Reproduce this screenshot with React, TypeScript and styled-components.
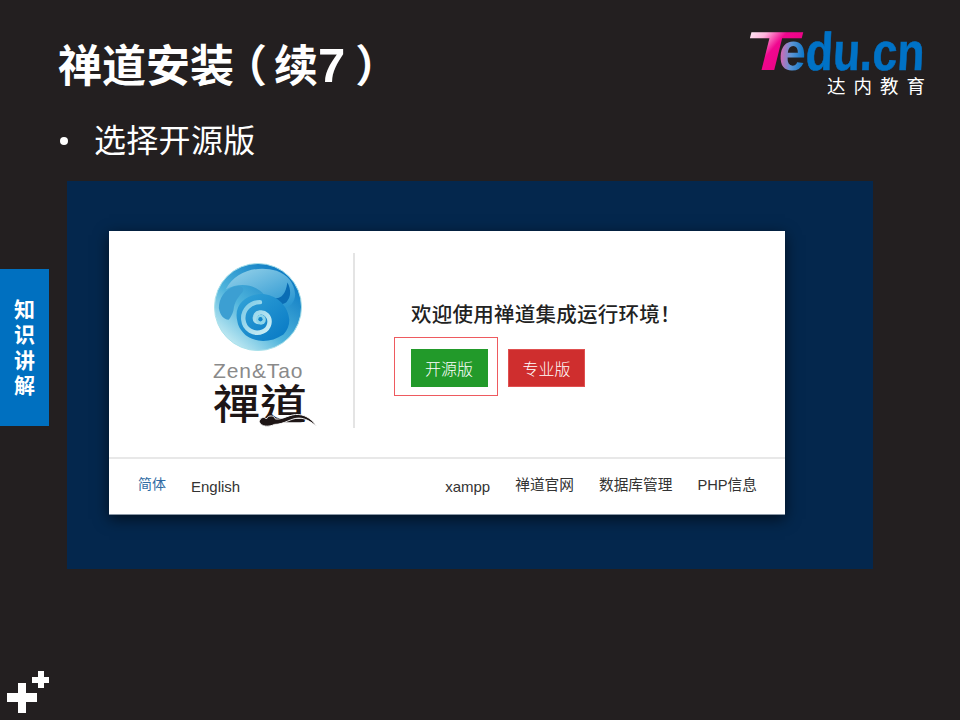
import React from "react";
import styled, { createGlobalStyle } from "styled-components";

const Global = createGlobalStyle`
  html, body { margin: 0; padding: 0; background: #231f20; }
  * { box-sizing: border-box; }
`;
const CJK = `"Liberation Sans", "Noto Sans CJK SC", sans-serif`;

const Slide = styled.div`
  position: relative; width: 960px; height: 720px; overflow: hidden;
  background: #231f20; font-family: ${CJK}; color: #fff;
  display: flex; flex-direction: column;
`;
const Header = styled.header`
  display: flex; justify-content: space-between; align-items: flex-start;
  height: 118px; padding: 31px 35px 0 58px;
`;
const Title = styled.h1`
  margin: -3px 0 0; font-size: 44px; line-height: 70px; font-weight: 700; white-space: nowrap;
  display: flex; align-items: baseline;
`;
const Paren = styled.span<{ $left: number; $right: number }>`
  font-family: "Noto Sans CJK SC", sans-serif;
  font-feature-settings: "halt";
  margin-left: ${(p) => p.$left}px; margin-right: ${(p) => p.$right}px;
`;
const Seven = styled.span`
  font-size: 49px;
`;
const Brand = styled.div`
  display: flex; flex-direction: column; align-items: flex-end; width: 177px;
`;
const BrandCn = styled.div`
  display: flex; gap: 8px; font-size: 18.5px; line-height: 22px; margin-top: 2px; color: #fff;
`;
const LogoSvg = styled.svg`
  display: block; margin-bottom: -9px;
`;
const Bullet = styled.div`
  display: flex; align-items: center; height: 46px; padding-left: 60px; font-size: 32px; line-height: 46px; letter-spacing: 0.3px;
  &::before { content: ""; width: 8px; height: 8px; border-radius: 50%; background: #fff; margin-right: 26px; }
`;
const Backdrop = styled.section`
  margin: 17px 0 0 67px; width: 806px; height: 388px; padding: 50px 88px 55px 42px;
  background: #04274d;
`;
const Card = styled.div`
  width: 676px; height: 284px; background: #fff; display: flex; flex-direction: column;
  box-shadow: 0 4px 14px rgba(0, 0, 0, 0.6);
  border-bottom: 1px solid #8a97a6;
`;
const Main = styled.div`
  height: 228px; display: flex; align-items: flex-start; border-bottom: 2px solid #e8e8e8;
`;
const LogoCol = styled.div`
  margin-top: 22px; width: 246px; height: 175px; border-right: 2px solid #e4e4e4;
  padding: 10px 0 0 104px; display: flex; flex-direction: column;
`;
const ZenText = styled.div`
  margin-top: 10px; font-size: 21px; line-height: 20px; color: #8a8a8a; font-family: "Liberation Sans", sans-serif;
  letter-spacing: 0.9px; white-space: nowrap;
`;
const ZenHan = styled.div`
  position: relative; width: 106px; height: 48px; font-family: "Noto Sans CJK TC", sans-serif;
  font-size: 47px; line-height: 46px; color: #1e1616; font-weight: 500; white-space: nowrap;
`;
const ZenGlyphs = styled.span`
  display: inline-block; transform: scaleY(0.86); transform-origin: 50% 20%;
`;
const Swoosh = styled.svg`
  position: absolute; left: 44px; top: 29px;
`;
const Welcome = styled.div`
  padding: 67px 0 0 39px; display: flex; flex-direction: column;
`;
const Heading = styled.h2`
  margin: 0 0 0 17px; font-size: 20.5px; line-height: 30px; font-weight: 500; letter-spacing: 0.25px; color: #222; white-space: nowrap;
  font-family: "Noto Sans CJK SC", sans-serif;
`;
const Buttons = styled.div`
  display: flex; align-items: flex-start; margin-top: 9px;
`;
const Highlight = styled.div`
  width: 104px; height: 59px; border: 1.5px solid #ee5a5f; padding: 11px 0 0 15.5px;
`;
const Btn = styled.div<{ $bg: string }>`
  width: 77px; height: 38px; background: ${(p) => p.$bg}; color: #fff; font-size: 16px;
  display: flex; align-items: center; justify-content: center; font-family: "Noto Sans CJK SC", sans-serif;
  font-weight: 300;
`;
const RedBtn = styled(Btn)`
  margin: 12px 0 0 10px; border: 1px solid #e05050;
`;
const Footer = styled.footer`
  flex: 1; display: flex; align-items: center; justify-content: space-between; padding: 0 28px 3px 29px;
  font-size: 14.7px; color: #333;
`;
const LinkGroup = styled.div<{ $gap: number }>`
  display: flex; align-items: center; gap: ${(p) => p.$gap}px;
`;
const FootLink = styled.span`
  color: #333; white-space: nowrap; line-height: 20px;
`;
const ActiveLink = styled(FootLink)`
  color: #2f6aa3; font-size: 14px; margin-top: -2px;
`;
const Latin = styled(FootLink)`
  font-size: 15px; margin-top: 3px;
`;
const SideTab = styled.aside`
  position: absolute; left: 0; top: 269px; width: 49px; height: 157px; background: #0070c0;
  display: flex; flex-direction: column; align-items: center; justify-content: center;
  font-size: 21px; line-height: 25.5px; font-weight: 700;
`;
const Plus = styled.svg`
  position: absolute; left: 7px; top: 671px;
`;

function TeduLogo() {
  return (
    <LogoSvg width="177" height="52" viewBox="0 0 177 52" aria-label="Tedu.cn">
      <defs>
        <linearGradient id="tg" x1="0" y1="0" x2="1" y2="0.7">
          <stop offset="0" stopColor="#ffffff" />
          <stop offset="0.3" stopColor="#ffb4dd" />
          <stop offset="0.55" stopColor="#f0078f" />
          <stop offset="1" stopColor="#e9007f" />
        </linearGradient>
        <linearGradient id="eg" x1="0" y1="0" x2="1" y2="0">
          <stop offset="0" stopColor="#ea5fae" />
          <stop offset="0.45" stopColor="#5d95d4" />
          <stop offset="1" stopColor="#0072c6" />
        </linearGradient>
      </defs>
      <text transform="translate(-7 39) skewX(-14) scale(1.6 1)" fontFamily="Liberation Sans" fontWeight="700" fontSize="55" fill="url(#tg)">T</text>
      <text transform="translate(30 39) skewX(-3) scale(0.92 1)" fontFamily="Liberation Sans" fontWeight="700" fontSize="53" fill="url(#eg)">e</text>
      <text transform="translate(57 39) skewX(-3) scale(0.84 1)" fontFamily="Liberation Sans" fontWeight="700" fontSize="53" fill="#0072c6" stroke="#0072c6" strokeWidth="0.6">du.cn</text>
    </LogoSvg>
  );
}

function Orb() {
  return (
    <svg width="90" height="90" viewBox="0 0 90 90">
      <defs>
        <linearGradient id="ob" x1="0.15" y1="0.9" x2="0.85" y2="0.1">
          <stop offset="0" stopColor="#c4ebf3" />
          <stop offset="0.4" stopColor="#4fb4dc" />
          <stop offset="1" stopColor="#0a78c2" />
        </linearGradient>
        <linearGradient id="oh" x1="0" y1="0" x2="0.8" y2="1">
          <stop offset="0" stopColor="#9ad4ea" />
          <stop offset="1" stopColor="#2b97d2" />
        </linearGradient>
        <linearGradient id="os" x1="0.1" y1="0.1" x2="0.9" y2="0.9">
          <stop offset="0" stopColor="#2f9fd6" />
          <stop offset="1" stopColor="#0a7cc6" />
        </linearGradient>
        <linearGradient id="oq" x1="0" y1="0" x2="1" y2="1">
          <stop offset="0" stopColor="#7ccae6" />
          <stop offset="1" stopColor="#cfeff5" />
        </linearGradient>
      </defs>
      <circle cx="45" cy="45" r="44.5" fill="url(#ob)" stroke="#a9e0ea" strokeWidth="1" />
      <path d="M12 27C22 8 45 2 64 8c11 4 18 12 19 24 0 8-6 15-15 14-9-1-13-10-19-16C39 21 25 20 12 27z" fill="url(#oh)" />
      <path d="M75 20c4 7 4 15-1 20-5 4-11 1-15-5 7 3 14 0 16-15z" fill="#0a6cb4" />
      <path d="M5 46c0-10 6-19 16-22 7-2 11 2 8 6-4 5-8 9-9 18-1 4-3 8-5 10-5 0-9-5-10-12z" fill="#3c9fd2" />
      <path d="M24 60C19 42 35 30 52 32c13 2 24 12 25 26 0 6-2 11-6 15-12 8-26 9-37 2-5-4-9-9-10-15z" fill="url(#os)" />
      <path d="M47 60c-3 1-6-1-5-5 1-5 8-6 12-2 5 5 3 14-4 17-9 4-19-2-20-12-1-10 7-18 17-18" fill="none" stroke="url(#oq)" strokeWidth="4.5" strokeLinecap="round" />
      <circle cx="48" cy="58" r="5" fill="#8fd6ea" />
      <circle cx="47.5" cy="57.5" r="2.2" fill="#1286cb" />
    </svg>
  );
}

export default function App() {
  return (
    <Slide>
      <Global />
      <Header>
        <Title>
          禅道安装<Paren $left={11} $right={7}>（</Paren>续<Seven>7</Seven><Paren $left={10} $right={0}>）</Paren>
        </Title>
        <Brand>
          <TeduLogo />
          <BrandCn>
            <span>达</span><span>内</span><span>教</span><span>育</span>
          </BrandCn>
        </Brand>
      </Header>
      <Bullet>选择开源版</Bullet>
      <Backdrop>
        <Card>
          <Main>
            <LogoCol>
              <Orb />
              <ZenText>Zen&amp;Tao</ZenText>
              <ZenHan>
                <ZenGlyphs>禪道</ZenGlyphs>
                <Swoosh width="62" height="18" viewBox="0 0 66 20">
                  <path d="M1 13c1-5 6-6 8-3 2-5 9-4 10 0 9 1 16-6 26-5 9 1 15 6 20 13-7-5-13-9-20-9-9 0-16 7-27 7-6 3-15 3-17-3z" fill="#1e1616" stroke="#fff" strokeWidth="1" />
                </Swoosh>
              </ZenHan>
            </LogoCol>
            <Welcome>
              <Heading>欢迎使用禅道集成运行环境！</Heading>
              <Buttons>
                <Highlight>
                  <Btn $bg="#229a2a">开源版</Btn>
                </Highlight>
                <RedBtn $bg="#cf2e2e">专业版</RedBtn>
              </Buttons>
            </Welcome>
          </Main>
          <Footer>
            <LinkGroup $gap={25}>
              <ActiveLink>简体</ActiveLink>
              <Latin>English</Latin>
            </LinkGroup>
            <LinkGroup $gap={25}>
              <Latin>xampp</Latin>
              <FootLink>禅道官网</FootLink>
              <FootLink>数据库管理</FootLink>
              <FootLink>PHP信息</FootLink>
            </LinkGroup>
          </Footer>
        </Card>
      </Backdrop>
      <SideTab>
        <span>知</span><span>识</span><span>讲</span><span>解</span>
      </SideTab>
      <Plus width="44" height="44" viewBox="0 0 44 44">
        <path d="M0 22h30v9H0zM11 12h8v30h-8z" fill="#fff" />
        <path d="M25 6h17v6H25zM31 0h6v17h-6z" fill="#fff" />
      </Plus>
    </Slide>
  );
}
